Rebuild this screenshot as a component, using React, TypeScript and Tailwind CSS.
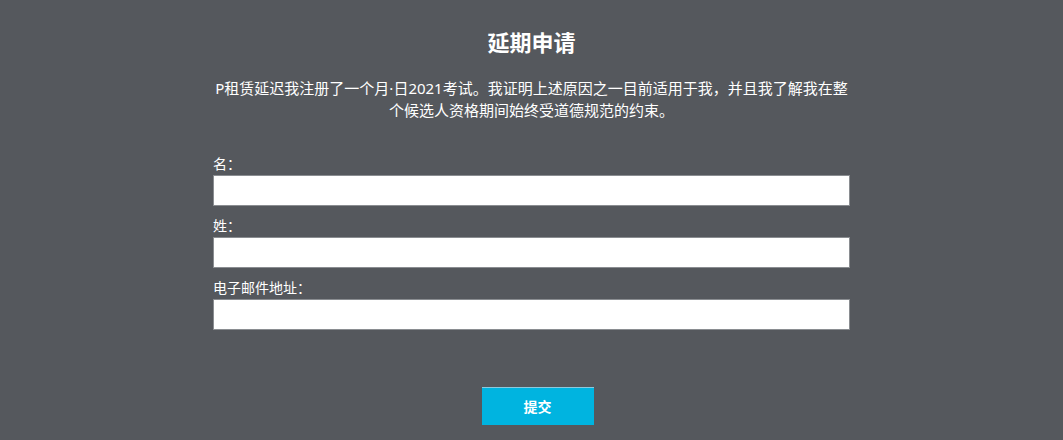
export default function App() {
  const fields = ["名：", "姓：", "电子邮件地址："];
  return (
    <div
      className="min-h-[440px] w-full bg-[#55585d] text-white"
      style={{ fontFamily: '"Noto Sans", "Noto Sans CJK SC", sans-serif' }}
    >
      <div className="mx-auto w-[637px] pt-[27px]">
        <h1 className="text-center text-[22px] font-bold leading-[30px]">延期申请</h1>
        <p className="mt-[20px] text-center text-[15px] leading-[22px]">
          P租赁延迟我注册了一个月·日2021考试。我证明上述原因之一目前适用于我，并且我了解我在整个候选人资格期间始终受道德规范的约束。
        </p>
        <form className="mt-[33px] flex flex-col">
          {fields.map((f) => (
            <div key={f} className="mb-[10px] flex flex-col">
              <label className="text-[14px] leading-[20px]">{f}</label>
              <input
                type="text"
                className="mt-[1px] h-[31px] w-full border border-[#8a8d91] bg-white px-2 text-black outline-none"
              />
            </div>
          ))}
          <div className="mt-[47px] flex justify-center pl-[12px]">
            <button
              type="button"
              className="h-[38px] w-[112px] border-t border-[#8cc9dd] bg-[#00b4e0] text-[14px] font-bold text-white"
            >
              提交
            </button>
          </div>
        </form>
      </div>
    </div>
  );
}
